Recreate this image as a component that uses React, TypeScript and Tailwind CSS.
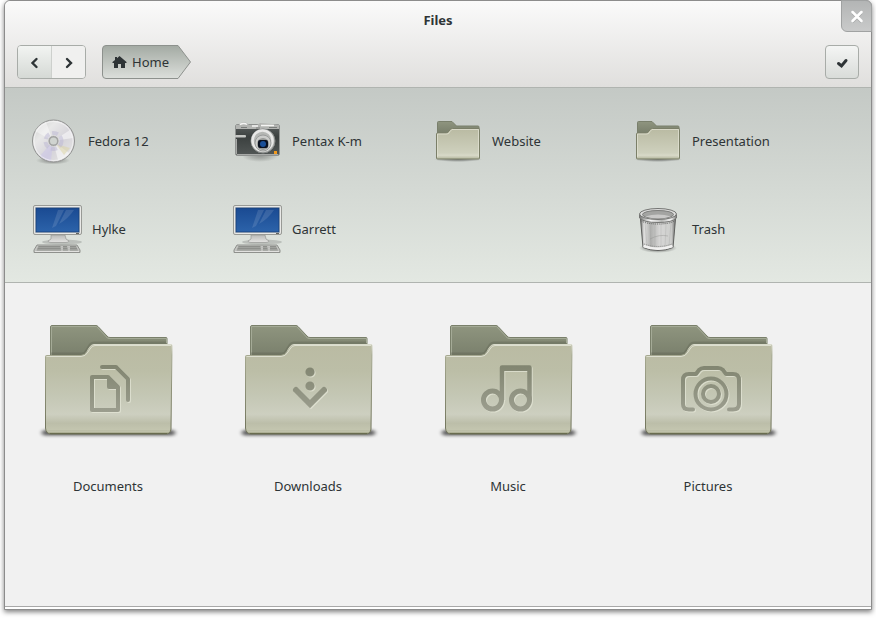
import type { ReactNode } from "react";

function Gradients() {
  return (
    <svg width="0" height="0" className="absolute" aria-hidden="true">
      <defs>
        <linearGradient id="folderFront" x1="0" y1="0" x2="0" y2="1">
          <stop offset="0" stopColor="#babba3" />
          <stop offset="0.3" stopColor="#bcbea7" />
          <stop offset="0.6" stopColor="#c5c8b6" />
          <stop offset="0.78" stopColor="#cdcfc0" />
          <stop offset="0.88" stopColor="#bcbea9" />
          <stop offset="0.95" stopColor="#c3c5af" />
          <stop offset="1" stopColor="#a3a588" />
        </linearGradient>
        <linearGradient id="smallFront" x1="0" y1="0" x2="0" y2="1">
          <stop offset="0" stopColor="#b9baa2" />
          <stop offset="0.8" stopColor="#ced0bd" />
          <stop offset="0.88" stopColor="#d8d9c8" />
          <stop offset="1" stopColor="#b3b59c" />
        </linearGradient>
        <linearGradient id="folderBack" x1="0" y1="0" x2="0" y2="1">
          <stop offset="0" stopColor="#8f957f" />
          <stop offset="1" stopColor="#757b68" />
        </linearGradient>
        <linearGradient id="folderGlyph" x1="0" y1="45" x2="0" y2="95" gradientUnits="userSpaceOnUse">
          <stop offset="0" stopColor="#80846f" />
          <stop offset="1" stopColor="#9c9e8f" />
        </linearGradient>
        <linearGradient id="folderEdge" x1="0" y1="0" x2="0" y2="1">
          <stop offset="0" stopColor="#d9dbcb" />
          <stop offset="0.12" stopColor="#a5a890" />
          <stop offset="1" stopColor="#6f7259" />
        </linearGradient>
        <radialGradient id="floorShadow">
          <stop offset="0" stopColor="#000" stopOpacity="0.7" />
          <stop offset="0.5" stopColor="#000" stopOpacity="0.4" />
          <stop offset="1" stopColor="#000" stopOpacity="0" />
        </radialGradient>
        <filter id="soften" x="-10%" y="-100%" width="120%" height="300%">
          <feGaussianBlur stdDeviation="2 1.500" />
        </filter>
        <linearGradient id="disc" x1="0" y1="0" x2="1" y2="1">
          <stop offset="0" stopColor="#c9cac9" />
          <stop offset="0.3" stopColor="#e8e8e8" />
          <stop offset="0.6" stopColor="#d6d4da" />
          <stop offset="1" stopColor="#eaeae6" />
        </linearGradient>
        <linearGradient id="screen" x1="0" y1="0" x2="0" y2="1">
          <stop offset="0" stopColor="#1a4a92" />
          <stop offset="1" stopColor="#2c63aa" />
        </linearGradient>
        <linearGradient id="metal" x1="0" y1="0" x2="0" y2="1">
          <stop offset="0" stopColor="#b9bab8" />
          <stop offset="1" stopColor="#e4e4e2" />
        </linearGradient>
        <linearGradient id="camera" x1="0" y1="0" x2="0" y2="1">
          <stop offset="0" stopColor="#5b605f" />
          <stop offset="0.4" stopColor="#3b403f" />
          <stop offset="1" stopColor="#525756" />
        </linearGradient>
        <linearGradient id="bin" x1="0" y1="0" x2="1" y2="0">
          <stop offset="0" stopColor="#6f706e" />
          <stop offset="0.1" stopColor="#e0e0df" />
          <stop offset="0.3" stopColor="#b0b1af" />
          <stop offset="0.55" stopColor="#d6d6d5" />
          <stop offset="0.88" stopColor="#cdcecc" />
          <stop offset="1" stopColor="#6f706e" />
        </linearGradient>
        <linearGradient id="rim" x1="0" y1="0" x2="1" y2="0">
          <stop offset="0" stopColor="#777876" />
          <stop offset="0.3" stopColor="#fafafa" />
          <stop offset="0.6" stopColor="#b8b9b7" />
          <stop offset="0.85" stopColor="#f4f4f4" />
          <stop offset="1" stopColor="#777876" />
        </linearGradient>
        <linearGradient id="crumb" x1="0" y1="0" x2="0" y2="1">
          <stop offset="0" stopColor="#a3aaa3" />
          <stop offset="1" stopColor="#dcdfdb" />
        </linearGradient>
      </defs>
    </svg>
  );
}

function DiscIcon() {
  return (
    <svg width="46" height="50" viewBox="0 0 46 50" aria-hidden="true">
      <ellipse cx="21" cy="43.500" rx="17" ry="4" fill="url(#floorShadow)" opacity="0.5" />
      <circle cx="21.500" cy="24" r="21" fill="url(#disc)" stroke="#919291" />
      <path d="M21 24 3 14A20 20 0 0 1 14 5Z" fill="#fff" opacity="0.4" />
      <path d="M21 24 8 39A20 20 0 0 0 19 44Z" fill="#c9c4ea" opacity="0.5" />
      <path d="M21 24 26 43A20 20 0 0 0 37 36Z" fill="#fff" opacity="0.5" />
      <path d="M24 27 32 38 38 31Z" fill="#dcd3a2" opacity="0.5" />
      <path d="M21 24 38 13A20 20 0 0 1 41 21Z" fill="#fff" opacity="0.5" />
      <circle cx="21.500" cy="24" r="19.500" fill="none" stroke="#fff" opacity="0.5" />
      <circle cx="21.500" cy="24" r="8" fill="none" stroke="#bcb7d3" strokeWidth="4" strokeDasharray="6 3" opacity="0.5" />
      <circle cx="21.500" cy="24" r="4.500" fill="#d0d4d0" stroke="#a3a4a3" strokeWidth="2" />
      <circle cx="21.500" cy="24" r="5.500" fill="none" stroke="#e2e2e2" strokeWidth="0.700" />
    </svg>
  );
}

function CameraIcon() {
  return (
    <svg width="50" height="50" viewBox="0 0 50 50" aria-hidden="true">
      <ellipse cx="28" cy="39" rx="18" ry="6" fill="url(#floorShadow)" opacity="0.4" />
      <rect x="3.500" y="7.500" width="44" height="31" rx="2" fill="url(#camera)" stroke="#8f9290" />
      <path d="M4 12V8h3V7q4-3 8-1l2 2h8l3-2 12 1 7 1v4Z" fill="#b2b4b1" />
      <path d="M8 7.500q4-2 7 0M20 9h6M29 8.500h13" stroke="#f5f5f4" strokeWidth="1.500" fill="none" />
      <path d="M9 10.500h6M24 11h4M37 10.500h8" stroke="#7a7d7b" />
      <rect x="3" y="18" width="11" height="2.500" rx="1" fill="#c4c6c3" />
      <path d="M4.500 22v15M5 37.500h41" stroke="#a7a9a7" />
      <circle cx="31" cy="24" r="12" fill="#b5b7b4" stroke="#868988" />
      <circle cx="30.500" cy="23.500" r="10" fill="none" stroke="#e8e8e7" strokeWidth="2.500" />
      <circle cx="31" cy="26" r="8" fill="#cbccca" stroke="#999b9a" />
      <circle cx="31" cy="27" r="6" fill="#979997" />
      <rect x="26" y="23" width="10" height="8" rx="2" fill="#0a1120" />
      <circle cx="31" cy="27" r="3" fill="#1a4f98" />
      <rect x="42" y="34" width="3" height="3" fill="#f39a1d" />
    </svg>
  );
}

function ComputerIcon() {
  return (
    <svg width="50" height="50" viewBox="0 0 50 50" aria-hidden="true">
      <ellipse cx="30" cy="37" rx="20" ry="2.500" fill="#7d807d" opacity="0.35" />
      <path d="M19 30h14l1 4 3 2q0 1.500-3 1.500H19q-3 0-3-1.500l3-2Z" fill="url(#metal)" stroke="#979895" strokeWidth="0.700" />
      <rect x="1.500" y="0.500" width="48" height="29" rx="1.500" fill="#cfd0cd" stroke="#989a96" />
      <rect x="2.500" y="1.500" width="46" height="27" rx="1" fill="none" stroke="#e9e9e7" />
      <rect x="4" y="3" width="43" height="24" fill="url(#screen)" stroke="#173f79" strokeWidth="0.800" />
      <path d="M20 23 26 5h6L24 21ZM27 19 34 5h8Q36 14 27 19Z" fill="#fff" opacity="0.12" />
      <path d="M44 28.500h3" stroke="#63645f" />
      <path d="M5 40h40l3 5v2.500H2V45Z" fill="#c3c4c1" stroke="#8f918d" />
      <path d="M6.500 41h22l.5 4.500H4.500ZM31 41h4l1 4.500h-5ZM38 41h6l2 4.500h-8Z" fill="#8e908c" />
      <path d="M6 42.500h39M5 44.500h41" stroke="#b3b4b1" strokeWidth="0.500" />
      <path d="M3 46.500h44" stroke="#e2e2e0" />
    </svg>
  );
}

function TrashIcon() {
  return (
    <svg width="50" height="50" viewBox="0 0 50 50" aria-hidden="true">
      <ellipse cx="26" cy="43" rx="19" ry="5" fill="url(#floorShadow)" opacity="0.8" />
      <path d="M8.500 14h35L41 42.500q-15 6-30 0Z" fill="url(#bin)" stroke="#5f605e" />
      <path d="M13 18l2 23M18 19l1 24M23 19v25M29 19v25M34 19l-1 24M39 18l-2 23" stroke="#8d8e8c" strokeWidth="0.700" opacity="0.3" />
      <path d="M18 34q9-5 18-3" stroke="#8e8f8d" fill="none" opacity="0.4" />
      <path d="M11.500 41q14.500 5.500 29 0" fill="none" stroke="#f1f1f0" strokeWidth="2.500" />
      <path d="M12 39q14 5 28 0" fill="none" stroke="#858684" strokeDasharray="1 1" />
      <path d="M9.500 16q5 3 16.500 3t16.500-3" fill="none" stroke="#5c5d5b" strokeDasharray="1 1" />
      <path d="M7.500 9v4q4 4.500 18.500 4.500t18.500-4.500V9Z" fill="url(#rim)" stroke="#747573" />
      <ellipse cx="26" cy="9" rx="18.500" ry="5.500" fill="#dededd" stroke="#747573" />
      <ellipse cx="26" cy="9.500" rx="15.500" ry="4" fill="#a3a4a2" stroke="#7d7e7c" />
      <path d="M13 11.500q13-4 26 0-13 4-26 0Z" fill="#c9c9c8" />
    </svg>
  );
}

function SmallFolderIcon() {
  return (
    <svg width="50" height="50" viewBox="0 0 50 50" aria-hidden="true">
      <ellipse cx="26" cy="42.500" rx="24" ry="2.500" fill="url(#floorShadow)" opacity="0.6" />
      <path d="M5.500 18V5.500q0-1 1-1H20l4.500 4.500H46q1 0 1 1V18Z" fill="url(#folderBack)" stroke="#7a806c" />
      <path d="M4.500 41V17q0-1 1-1H14q2 0 3-2l1.500-2q1-.500 2-.500H47q.500 0 .500 1V41q0 1-1 1H5.500q-1 0-1-1Z" fill="url(#smallFront)" stroke="#7b7f68" />
      <path d="M5.500 40V17H15q2 0 3-2.500l2-2H46.500V40" fill="none" stroke="#e1e2d3" opacity="0.75" />
    </svg>
  );
}

function BigFolderIcon({ children }: { children: ReactNode }) {
  return (
    <svg width="144" height="128" viewBox="0 0 144 128" aria-hidden="true">
      <rect x="6" y="112" width="133" height="5.500" rx="3" fill="#000" opacity="0.6" filter="url(#soften)" />
      <path d="M14.500 44V9q0-1.500 1.500-1.500H60q1 0 2 1L71 18q1 1.500 3 1.500h56q1 0 1 1V44Z" fill="url(#folderBack)" stroke="#7a806b" />
      <path d="M15.500 37V8.500H60.500L70 18.500q1 2 3 2h57.500V25" fill="none" stroke="#a4aa96" />
      <path d="M15 36H46q3 0 4.500-3l3-5q1.500-3 5-3H130" fill="none" stroke="#555b48" strokeWidth="3" opacity="0.3" />
      <path
        d="M9.500 110V38.500q0-1 1-1H45q4 0 6-4l2-3.500q2-3.500 5-3.500h77q1 0 1 1L135 111q-.500 5-5 5H15q-5 0-5.500-6Z"
        fill="url(#folderFront)"
        stroke="url(#folderEdge)"
      />
      <path d="M10.500 38.500H45q4.500 0 7-4.500l2-3q2-3.500 5-3.500h76" fill="none" stroke="#dddfd0" />
      <path d="M12 113.500h121" stroke="#d0d2bd" opacity="0.4" />
      <path d="M14 115.500h117" stroke="#616447" opacity="0.8" />
      <g transform="translate(1 1)" stroke="#e6e8d9" fill="none" opacity="0.7">
        {children}
      </g>
      <g stroke="url(#folderGlyph)" fill="none">
        {children}
      </g>
    </svg>
  );
}

const documentsGlyph = (
  <g strokeWidth="4" strokeLinejoin="round" strokeLinecap="round">
    <path d="M56 59H72L82 69V92H56Z" />
    <path d="M73 61V69H80ZM75 65V67H77Z" />
    <path d="M66 49H80L92 61V82" />
  </g>
);

const downloadsGlyph = (
  <g>
    <path d="M60 72 74 86 88 72" strokeWidth="6" strokeLinecap="round" />
    <circle cx="74" cy="54" r="2.300" strokeWidth="4.600" />
    <circle cx="74" cy="68" r="2.300" strokeWidth="4.600" />
  </g>
);

const musicGlyph = (
  <g strokeWidth="5">
    <circle cx="56.500" cy="82" r="9" />
    <circle cx="84.500" cy="82" r="9" />
    <path d="M66 82V49.500H93.500V82" strokeWidth="4.500" strokeLinejoin="round" />
    <path d="M66 50.500H93" />
  </g>
);

const picturesGlyph = (
  <g strokeWidth="4" strokeLinecap="round" strokeLinejoin="round">
    <path d="M57 91.500H53Q47 91.500 47 86V62Q47 56 53 56H60L63 52Q65 50 68 50H82Q85 50 87 52L90 56H97Q103 56 103 62V86Q103 91.500 97 91.500H93" />
    <circle cx="75" cy="76" r="15.500" />
    <circle cx="75" cy="76" r="8" />
  </g>
);

const places = [
  { name: "Fedora 12", icon: <DiscIcon /> },
  { name: "Pentax K-m", icon: <CameraIcon /> },
  { name: "Website", icon: <SmallFolderIcon /> },
  { name: "Presentation", icon: <SmallFolderIcon /> },
  { name: "Hylke", icon: <ComputerIcon /> },
  { name: "Garrett", icon: <ComputerIcon /> },
  { name: "Trash", icon: <TrashIcon />, last: true },
];

const folders = [
  { name: "Documents", glyph: documentsGlyph },
  { name: "Downloads", glyph: downloadsGlyph },
  { name: "Music", glyph: musicGlyph },
  { name: "Pictures", glyph: picturesGlyph },
];

export default function App() {
  return (
    <div className="flex min-h-screen flex-col bg-white px-1 pb-2 font-['Noto_Sans',sans-serif] text-[13px] leading-5 text-[#2e3436]">
      <Gradients />
      <div className="flex flex-1 flex-col rounded-t-md border border-[#8c8c8c] bg-white shadow-[0_2px_5px_rgba(0,0,0,0.5)]">
        <header className="relative rounded-t-md border-b border-[#b0b4b0] bg-linear-to-b from-[#fafafa] to-[#e0dfdd] pb-2">
          <h1 className="pt-[9px] pb-[15px] text-center font-bold">Files</h1>
          <button
            aria-label="Close"
            className="absolute -top-px -right-px flex h-8 w-[31px] items-center justify-center rounded-tr-md rounded-bl-md border border-[#a0a2a2] bg-linear-to-b from-[#b3b5b5] to-[#c9caca]"
          >
            <svg width="14" height="14" viewBox="0 0 14 14" aria-hidden="true">
              <path d="M2.500 4 11.500 13M11.500 4 2.500 13" stroke="#8f9191" strokeWidth="2.500" opacity="0.5" />
              <path d="M2.500 3 11.500 12M11.500 3 2.500 12" stroke="#fff" strokeWidth="2.500" strokeLinecap="round" />
            </svg>
          </button>
          <div className="flex items-center px-3">
            <div className="flex overflow-hidden rounded-[4px] border border-[#a8aca8]">
              <button
                aria-label="Back"
                className="flex h-8 w-[34px] items-center justify-center border-r border-[#cdd0cd] bg-linear-to-b from-[#f2f4f2] to-[#d5d9d5]"
              >
                <svg width="12" height="14" viewBox="0 0 12 14" aria-hidden="true">
                  <path d="M7.500 4 3.500 8 7.500 12" fill="none" stroke="#2e3436" strokeWidth="2.400" strokeLinecap="round" />
                </svg>
              </button>
              <button aria-label="Forward" className="flex h-8 w-[33px] items-center justify-center bg-[#f0f0ef]">
                <svg width="12" height="14" viewBox="0 0 12 14" aria-hidden="true">
                  <path d="M4 4 8 8 4 12" fill="none" stroke="#2e3436" strokeWidth="2.400" strokeLinecap="round" />
                </svg>
              </button>
            </div>
            <nav aria-label="Path" className="ml-4">
              <button className="relative flex h-[34px] w-[90px] items-center gap-[5px] pl-2.5">
                <svg width="90" height="34" viewBox="0 0 90 34" className="absolute inset-0" aria-hidden="true">
                  <path d="M4 .5H76L88.500 17 76 33.500H4Q.5 33.500 .5 30V4Q.5 .5 4 .5Z" fill="url(#crumb)" stroke="#8d918d" />
                </svg>
                <svg width="15" height="14" viewBox="0 0 15 14" className="relative" aria-hidden="true">
                  <path d="M7.500 1 14.500 7v1H13v5H9V9H6v4H2V8H.5V7L3 5V2h2v1.200Z" fill="#2e3436" />
                </svg>
                <span className="relative">Home</span>
              </button>
            </nav>
            <button
              aria-label="Select items"
              className="ml-auto flex size-[34px] items-center justify-center rounded-[4px] border border-[#a8aca8] bg-linear-to-b from-[#f4f5f4] to-[#d9dcd9]"
            >
              <svg width="14" height="14" viewBox="0 0 14 14" aria-hidden="true">
                <path d="M3.500 8.500 6.500 11 11 5.500" fill="none" stroke="#2e3436" strokeWidth="3" strokeLinecap="round" />
              </svg>
            </button>
          </div>
        </header>

        <ul className="grid grid-cols-[repeat(auto-fill,200px)] border-b border-[#b0b4b0] bg-linear-to-b from-[#c4c9c5] to-[#e3e8e2] pt-2.5 pb-2 pl-[27px]">
          {places.map((place) => (
            <li key={place.name} className={place.last ? "col-start-4" : ""}>
              <button className="flex h-22 items-center gap-2.5">
                {place.icon}
                <span className="pb-0.5">{place.name}</span>
              </button>
            </li>
          ))}
        </ul>

        <main className="flex-1 border-b border-[#a8a8a8] bg-[#f1f1f1] pt-[35px] pl-[3px]">
          <ul className="grid grid-cols-[repeat(auto-fill,200px)]">
            {folders.map((folder) => (
              <li key={folder.name} className="flex justify-center">
                <button className="flex flex-col items-center gap-[30px]">
                  <BigFolderIcon>{folder.glyph}</BigFolderIcon>
                  {folder.name}
                </button>
              </li>
            ))}
          </ul>
        </main>
        <div className="h-0.5" />
      </div>
    </div>
  );
}
